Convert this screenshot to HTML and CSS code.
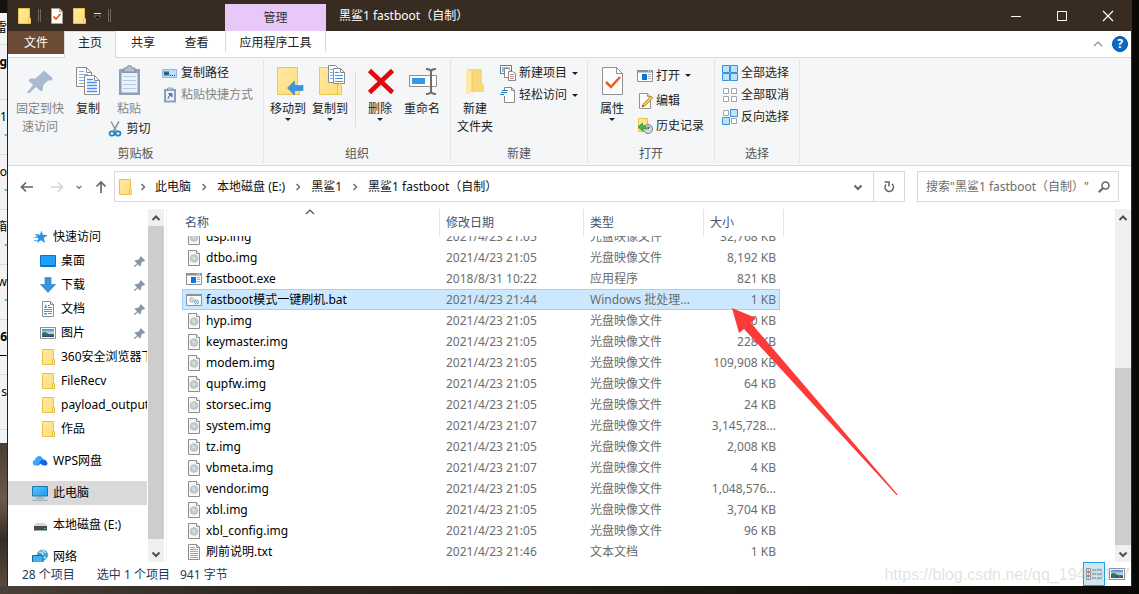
FILE: index.html
```html
<!DOCTYPE html>
<html lang="zh-CN">
<head>
<meta charset="utf-8">
<title>黑鲨1 fastboot（自制）</title>
<link rel="stylesheet" href="styles.css">
</head>
<body>
<svg class="sprite" aria-hidden="true">
  <defs>
    <linearGradient id="gFolder" x1="0" y1="0" x2="1" y2="1"><stop offset="0" stop-color="#ffe9a2"/><stop offset="1" stop-color="#ffdc7a"/></linearGradient>
    <linearGradient id="gBlue" x1="0" y1="0" x2="1" y2="1"><stop offset="0" stop-color="#5cc4fb"/><stop offset="1" stop-color="#1e9bf0"/></linearGradient>
    <linearGradient id="gSky" x1="0" y1="0" x2="0" y2="1"><stop offset="0" stop-color="#3f83d8"/><stop offset=".55" stop-color="#d6ecfa"/><stop offset=".6" stop-color="#4e8060"/><stop offset="1" stop-color="#24476b"/></linearGradient>
  </defs>
  <symbol id="folder" viewBox="0 0 16 16"><path d="M2.500.5h11v10h1v5h-12z" fill="url(#gFolder)" stroke="#e9c246"/><path d="M12.500 15v-4l1-1 1 1v4" fill="#ffe48e" stroke="#e9c246"/></symbol>
  <symbol id="checkdoc" viewBox="0 0 16 16"><path d="M2.500.5h8l3 3v12h-11z" fill="#fff" stroke="#a0a0a0"/><path d="M10.500.5v3h3" fill="none" stroke="#a0a0a0"/><path d="M4.500 8.500l2.500 2.500 4.500-5" fill="none" stroke="#f15a1c" stroke-width="1.800"/></symbol>
  <symbol id="chevR" viewBox="0 0 8 8"><path d="M2.500 1l3 3-3 3" fill="none" stroke="#6f6f6f" stroke-width="1.500"/></symbol>
  <symbol id="chevD" viewBox="0 0 12 12"><path d="M2.500 4.500l3.500 3.500 3.500-3.500" fill="none" stroke="currentColor" stroke-width="2"/></symbol>
  <symbol id="chevU" viewBox="0 0 12 12"><path d="M2.500 8l3.500-3.500 3.500 3.500" fill="none" stroke="currentColor" stroke-width="2"/></symbol>
  <symbol id="thinU" viewBox="0 0 12 12"><path d="M2 8l4-4 4 4" fill="none" stroke="currentColor" stroke-width="1.200"/></symbol>
  <symbol id="pinS" viewBox="0 0 16 16"><path d="M9.500 2.500l4.500 4.500-1 1-1.200-.2-2.300 2.300.1 2.200-1.100 1-2.500-2.500L3 14l-1-.9 3.300-3.200L2.700 7.400l1-1 2.400.1 2.200-2.200L8.500 3.300z" fill="#8a98a6"/></symbol>
  <symbol id="img" viewBox="0 0 16 16"><path d="M2.500.5h8l3 3v12h-11z" fill="#f7f7f7" stroke="#8e8e8e"/><path d="M10.500.5v3h3" fill="#fff" stroke="#8e8e8e"/><circle cx="8" cy="8.500" r="3.800" fill="#c9cccd" stroke="#b0b4b6" stroke-width=".8"/><path d="M5.800 6.300l1.500 1.500" stroke="#e8eaeb"/><circle cx="8" cy="8.500" r=".8" fill="#f4f4f4"/></symbol>
  <symbol id="exe" viewBox="0 0 16 16"><path d="M.5 2.500h15v11H.5z" fill="#fff" stroke="#8b9299"/><path d="M0 2h16v2.500H0z" fill="#8b9299"/><path d="M11 3h1m1 0h1" stroke="#fff"/><path d="M5 6h5v6H5z" fill="#0a78d7"/><path d="M11 6.500h3M11 8.500h3M11 10.500h3" stroke="#a6acb2"/></symbol>
  <symbol id="bat" viewBox="0 0 16 16"><path d="M.5 2.500h15v11H.5z" fill="#f8fafb" stroke="#8b9299"/><path d="M0 2h16v2H0z" fill="#8b9299"/><circle cx="6" cy="8" r="2.200" fill="#fff" stroke="#7c858d" stroke-dasharray="1.500 .5"/><circle cx="6" cy="8" r=".8" fill="#7c858d"/><circle cx="10.500" cy="10" r="2" fill="#dff1fb" stroke="#78a9c5"/><circle cx="10.500" cy="10" r=".6" fill="#4f8aac"/></symbol>
  <symbol id="txt" viewBox="0 0 16 16"><path d="M2.500.5h8l3 3v12h-11z" fill="#fff" stroke="#8e8e8e"/><path d="M10.500.5v3h3" fill="none" stroke="#8e8e8e"/><path d="M4 3.500h5M4 5.500h8M4 7.500h8M4 9.500h8M4 11.500h8M4 13.500h8" stroke="#a2a2a2"/></symbol>
  <symbol id="pic" viewBox="0 0 16 16"><path d="M.5 2.500h15v11H.5z" fill="#fff" stroke="#8f8f8f"/><path d="M2 4h12v8H2z" fill="url(#gSky)"/><path d="M2 8q3-2 5 0t7 1v1H2z" fill="#3d6e52"/></symbol>
  <symbol id="copyL" viewBox="0 0 32 32"><path d="M4.500 2.500h10l5 5v14h-15z" fill="#fff" stroke="#8b8b8b"/><path d="M14.500 2.500v5h5" fill="none" stroke="#8b8b8b"/><path d="M7 6.500h5M7 9.500h9M7 12.500h6M7 15.500h6M7 18.500h6" stroke="#7aaef0"/><path d="M12.500 10.500h10l5 5v14h-15z" fill="#fff" stroke="#8b8b8b"/><path d="M22.500 10.500v5h5" fill="none" stroke="#8b8b8b"/><path d="M15 14.500h6M15 17.500h10M15 20.500h10M15 23.500h10M15 26.500h10" stroke="#4d8ff0" stroke-width="1.300"/></symbol>
</svg>

<div class="desktop">
  <aside class="behind" aria-hidden="true">
    <div class="behind-page">
      <p>雷</p><p><b>g</b></p><p>.1<i>·</i></p><p>_o<i>·</i></p><p>箱<i>·</i></p><p>w<i>·</i></p><p><b>6</b>—</p><p>s</p>
    </div>
  </aside>

  <div class="window">
    <header class="titlebar">
      <div class="quick">
        <svg class="i16"><use href="#folder"/></svg>
        <span class="bar"></span>
        <svg class="i16"><use href="#checkdoc"/></svg>
        <svg class="i16"><use href="#folder"/></svg>
        <svg class="caret-s" viewBox="0 0 9 9"><path d="M1 2.500h7" stroke="#ddd"/><path d="M1 5h7L4.500 8.500z" fill="#000" stroke="#bbb" stroke-width=".5"/></svg>
        <span class="bar"></span>
      </div>
      <div class="context-head">管理</div>
      <h1>黑鲨1 fastboot（自制）</h1>
      <div class="caption">
        <button aria-label="最小化"><svg class="i12" viewBox="0 0 12 12"><path d="M1 6.500h10" stroke="#fff"/></svg></button>
        <button aria-label="最大化"><svg class="i12" viewBox="0 0 12 12"><path d="M1.500 1.500h9v9h-9z" fill="none" stroke="#fff"/></svg></button>
        <button aria-label="关闭"><svg class="i12" viewBox="0 0 12 12"><path d="M1 1l10 10M11 1L1 11" stroke="#fff" stroke-width="1.200"/></svg></button>
      </div>
    </header>

    <nav class="tabs">
      <button class="tab file">文件</button>
      <button class="tab active">主页</button>
      <button class="tab share">共享</button>
      <button class="tab view">查看</button>
      <button class="tab tools">应用程序工具</button>
      <div class="tabs-end">
        <button class="collapse" aria-label="折叠功能区"><svg class="i12"><use href="#thinU"/></svg></button>
        <button class="help" aria-label="帮助">?</button>
      </div>
    </nav>

    <section class="ribbon">
      <div class="group clip">
        <div class="tools-row">
          <button class="big off wide"><svg class="i32" viewBox="0 0 32 32"><path d="M20 5.500l9 8-2 2-3 0-5 5 0 4-2 2-5-4.500L5 28.500l-2-1 6-7.500-4.500-4.500 2-2 5 0 5.500-5z" fill="#a9bace"/></svg>固定到快<br>速访问</button>
          <button class="big copy"><svg class="i32"><use href="#copyL"/></svg>复制</button>
          <div class="paste">
            <button class="big off"><svg class="i32" viewBox="0 0 32 32"><path d="M6 4h21v26H6z" fill="#8f9fba"/><path d="M8.500 8h16v19.500h-16z" fill="#e9f1fb"/><path d="M10 11.500h13M10 15.500h13M10 19.500h13M10 23.500h13" stroke="#b9cae2"/><path d="M11 3h3a2.500 2.500 0 015 0h3v4H11z" fill="#b6c1d0" stroke="#7e8ca3"/></svg>粘贴</button>
            <button class="small"><svg class="i16" viewBox="0 0 16 16"><path d="M4 .5l5.500 10M12 .5L6.500 10" stroke="#8a949e" stroke-width="1.500"/><ellipse cx="5" cy="12.500" rx="2.500" ry="2.200" fill="none" stroke="#1683c7" stroke-width="1.700"/><ellipse cx="11" cy="12.500" rx="2.500" ry="2.200" fill="none" stroke="#1683c7" stroke-width="1.700"/></svg>剪切</button>
          </div>
          <div class="stack">
            <button class="small"><svg class="i16" viewBox="0 0 16 16"><path d="M.5 4.500h14v8H.5z" fill="#b7e2fb" stroke="#86bbdb"/><path d="M2 6.500l1 4 1-4 1 4 1-4 1 4" fill="none" stroke="#173d59" stroke-width=".9"/><path d="M8 10.500h1m1 0h1m1 0h1" stroke="#173d59"/></svg>复制路径</button>
            <button class="small off"><svg class="i16" viewBox="0 0 16 16"><path d="M2 2h12v13.500H2z" fill="#8f9fba"/><path d="M4 4h8v9.500H4z" fill="#eef3fa"/><path d="M5.500 1h5v2h-5z" fill="#cad4e2" stroke="#8f9fba"/><path d="M6 12q0-3 2.500-4M6.500 6.500H10V10z" fill="#5475a8" stroke="#5475a8"/></svg>粘贴快捷方式</button>
          </div>
        </div>
        <div class="group-name">剪贴板</div>
      </div>

      <div class="group org">
        <div class="tools-row">
          <button class="big"><svg class="i32" viewBox="0 0 32 32"><path d="M5.500 2.500h20v22h2v5h-22z" fill="url(#gFolder)" stroke="#e9c75a"/><path d="M15.500 23l7-7v4.500H31v5h-8.500V30z" fill="#3795e6" stroke="#2a7bc4" stroke-width=".6"/></svg>移动到<span class="tri"></span></button>
          <button class="big"><svg class="i32" viewBox="0 0 32 32"><path d="M5.500 2.500h18v27h-18z" fill="url(#gFolder)" stroke="#e9c75a"/><path d="M14.500.5h7l4 4v13h-11z" fill="#fff" stroke="#8b8b8b"/><path d="M16 4.500h4M16 7.500h4M16 10.500h4M16 13.500h4" stroke="#7aaef0"/><path d="M19.500 3.500h7l4 4v11h-11z" fill="#fff" stroke="#8b8b8b"/><path d="M26.500 3.500v4h4" fill="none" stroke="#8b8b8b"/><path d="M21 7.500h4M21 10.500h8M21 13.500h8M21 16.500h8" stroke="#4d8ff0"/><path d="M23.500 29.500v-9l2-2 2 2v9z" fill="#ffe48e" stroke="#e9c75a"/></svg>复制到<span class="tri"></span></button>
          <span class="rule"></span>
          <button class="big"><svg class="i32" viewBox="0 0 32 32"><path d="M5.500 5.500l23 22M28.500 5.500l-23 22" stroke="#e2050d" stroke-width="4.500"/></svg>删除<span class="tri"></span></button>
          <button class="big"><svg class="i32" viewBox="0 0 32 32"><path d="M3.500 10.500h27v11h-27z" fill="#fff" stroke="#8e8e8e"/><path d="M6 13h13v6H6z" fill="#3797e8"/><path d="M20 4q5 0 5 3 0-3 5-3M25 6v21M20 29q5 0 5-3 0 3 5 3" fill="none" stroke="#6d6d6d" stroke-width="2"/></svg>重命名</button>
        </div>
        <div class="group-name">组织</div>
      </div>

      <div class="group new">
        <div class="tools-row">
          <button class="big"><svg class="i32" viewBox="0 0 32 32"><path d="M8 4h15v14l2 2v7H8z" fill="#f9d879"/><path d="M7 4l6 3v19l-5 4-1-3z" fill="#ffe9a8"/><path d="M13 7v20" stroke="#edc85c"/></svg>新建<br>文件夹</button>
          <div class="stack">
            <button class="small"><svg class="i16" viewBox="0 0 16 16"><path d="M.5.5h11v8H.5z" fill="#fff" stroke="#557f93"/><path d="M2 2h8v5H2z" fill="#80c8e6"/><path d="M4.500 3.500h4l2 2v7h-6z" fill="#fff" stroke="#888"/><path d="M8.500 6.500h4l3 2v7h-7z" fill="#fff" stroke="#888"/><path d="M10 9.500h4M10 11.500h4M10 13.500h4" stroke="#c08b86"/></svg>新建项目<span class="tri"></span></button>
            <button class="small"><svg class="i16" viewBox="0 0 16 16"><path d="M4.500 3V.5h7l3 3v12h-10V9" fill="#fff" stroke="#888"/><path d="M11.500.5v3h3" fill="none" stroke="#888"/><path d="M2 3.500h6M1 5.500h6M0 7.500h4" stroke="#1780c8"/></svg>轻松访问<span class="tri"></span></button>
          </div>
        </div>
        <div class="group-name">新建</div>
      </div>

      <div class="group open">
        <div class="tools-row">
          <button class="big"><svg class="i32" viewBox="0 0 32 32"><path d="M6.500 2.500h14l6 6v21h-20z" fill="#fcfcfc" stroke="#929292"/><path d="M20.500 2.500v6h6" fill="none" stroke="#929292"/><path d="M10 17l5 5 9-10" fill="none" stroke="#f15a1c" stroke-width="2.500"/></svg>属性<span class="tri"></span></button>
          <div class="stack roomy">
            <button class="small"><svg class="i16"><use href="#exe"/></svg>打开<span class="tri"></span></button>
            <button class="small"><svg class="i16" viewBox="0 0 16 16"><path d="M2.500.5h8l3 3v12h-11z" fill="#fff" stroke="#929292"/><path d="M10.500.5v3h3" fill="none" stroke="#929292"/><path d="M5 14l1-3 8-8 2 2-8 8z" fill="#f4c34e" stroke="#a87b35" stroke-width=".7"/><path d="M5 14l1-2 1 1z" fill="#333"/></svg>编辑</button>
            <button class="small"><svg class="i16" viewBox="0 0 16 16"><path d="M1.500.5h9v13h-9z" fill="url(#gFolder)" stroke="#e9c246"/><circle cx="11" cy="11" r="4.500" fill="#d8dbdd" stroke="#787d80"/><path d="M11 8v3l2-2" fill="none" stroke="#555"/><path d="M1 9l4.500-4v2.300q4 .2 4.300 4.200-2-1.500-4.300-1v2.500z" fill="#46b749" stroke="#27852a" stroke-width=".6"/></svg>历史记录</button>
          </div>
        </div>
        <div class="group-name">打开</div>
      </div>

      <div class="group select">
        <div class="tools-row">
          <div class="stack">
            <button class="small"><svg class="i16" viewBox="0 0 16 16"><path d="M.5.5h7v7h-7zM8.500.5h7v7h-7zM.5 8.500h7v7h-7zM8.500 8.500h7v7h-7z" fill="#b8e3fb" stroke="#3a92dc"/></svg>全部选择</button>
            <button class="small"><svg class="i16" viewBox="0 0 16 16"><path d="M1.500 1.500h5v5h-5zM9.500 1.500h5v5h-5zM1.500 9.500h5v5h-5zM9.500 9.500h5v5h-5z" fill="#fff" stroke="#a5a5a5"/></svg>全部取消</button>
            <button class="small"><svg class="i16" viewBox="0 0 16 16"><path d="M1.500 1.500h5v5h-5zM9.500 9.500h5v5h-5z" fill="#fff" stroke="#a5a5a5"/><path d="M8.500.5h7v7h-7zM.5 8.500h7v7h-7z" fill="#b8e3fb" stroke="#3a92dc"/></svg>反向选择</button>
          </div>
        </div>
        <div class="group-name">选择</div>
      </div>
    </section>

    <div class="locbar">
      <div class="arrows">
        <button aria-label="后退"><svg class="i16" viewBox="0 0 16 16"><path d="M14 8H3M7 3.500L2.500 8 7 12.500" fill="none" stroke="#666" stroke-width="1.700"/></svg></button>
        <button aria-label="前进"><svg class="i16" viewBox="0 0 16 16"><path d="M2 8h11M9 3.500l4.500 4.500L9 12.500" fill="none" stroke="#d5d5d5" stroke-width="1.700"/></svg></button>
        <button class="recent" aria-label="最近"><svg class="i8" viewBox="0 0 12 12"><use href="#chevD"/></svg></button>
        <button aria-label="上移"><svg class="i16" viewBox="0 0 16 16"><path d="M8 14V3M3.500 7.500L8 3l4.500 4.500" fill="none" stroke="#666" stroke-width="1.700"/></svg></button>
      </div>
      <div class="address">
        <svg class="i16"><use href="#folder"/></svg>
        <svg class="i8"><use href="#chevR"/></svg><a href="#">此电脑</a>
        <svg class="i8"><use href="#chevR"/></svg><a href="#">本地磁盘 (E:)</a>
        <svg class="i8"><use href="#chevR"/></svg><a href="#">黑鲨1</a>
        <svg class="i8"><use href="#chevR"/></svg><a href="#">黑鲨1 fastboot（自制）</a>
        <button class="drop" aria-label="以前的位置"><svg class="i12"><use href="#chevD"/></svg></button>
        <button class="refresh" aria-label="刷新"><svg class="i12" viewBox="0 0 12 12"><path d="M3 3.500A4.200 4.200 0 109 3" fill="none" stroke="#666" stroke-width="1.600"/><path d="M1.500 1h4.500v4.500" fill="none" stroke="#666" stroke-width="1.600"/></svg></button>
      </div>
      <label class="search">
        <input type="text" aria-label="搜索" placeholder="搜索&quot;黑鲨1 fastboot（自制）&quot;">
        <svg class="i12" viewBox="0 0 12 12"><circle cx="7.500" cy="4.500" r="3.500" fill="none" stroke="#666" stroke-width="1.600"/><path d="M5 7L.8 11.200" stroke="#666" stroke-width="2"/></svg>
      </label>
    </div>

    <main class="body">
      <div class="navpane">
        <ul class="tree">
          <li><svg class="i16" viewBox="0 0 16 16"><path d="M9.500 1.500l1.300 4.300 4.700.2-3.700 3 1.200 5-4-2.700-4 2.700 1.300-4.600L3.500 6.500l4.500-.7z" fill="#2b93df"/><path d="M3 5.500h4M1.500 8.500h4M2 11.500h4" stroke="#5cb8f0"/></svg><span>快速访问</span></li>
          <li class="sub"><svg class="i16" viewBox="0 0 16 16"><path d="M.5 2.500h15v11H.5z" fill="#1ea0f7" stroke="#0b74c4"/><path d="M1 12.500h14" stroke="#0b74c4"/></svg><span>桌面</span><svg class="pin"><use href="#pinS"/></svg></li>
          <li class="sub"><svg class="i16" viewBox="0 0 16 16"><path d="M5 .5h6v7h4.500L8 15.500.5 7.500H5z" fill="#3a93e2" stroke="#2a78c0" stroke-width=".6"/></svg><span>下载</span><svg class="pin"><use href="#pinS"/></svg></li>
          <li class="sub"><svg class="i16" viewBox="0 0 16 16"><path d="M2.500.5h8l3 3v12h-11z" fill="#fff" stroke="#8e8e8e"/><path d="M10.500.5v3h3" fill="none" stroke="#8e8e8e"/><path d="M8 4.500h2M8 6.500h4M4 8.500h8M4 10.500h8M8 12.500h4" stroke="#3b9adb"/><path d="M4 7l2-4 1 4M4 12h3v1.500H4z" fill="#3b9adb"/></svg><span>文档</span><svg class="pin"><use href="#pinS"/></svg></li>
          <li class="sub"><svg class="i16"><use href="#pic"/></svg><span>图片</span><svg class="pin"><use href="#pinS"/></svg></li>
          <li class="sub"><svg class="i16"><use href="#folder"/></svg><span>360安全浏览器下载</span></li>
          <li class="sub"><svg class="i16"><use href="#folder"/></svg><span>FileRecv</span></li>
          <li class="sub"><svg class="i16"><use href="#folder"/></svg><span>payload_output</span></li>
          <li class="sub"><svg class="i16"><use href="#folder"/></svg><span>作品</span></li>
          <li class="root"><svg class="i16" viewBox="0 0 16 16"><path d="M2.500 12.500a2.800 2.800 0 01.5-5.400A4 4 0 0110 4.500q1 .7 1.300 1.700L6 12.500z" fill="#3aa4ff"/><path d="M5 12.500q2.500-1 3-4a3.800 3.800 0 017 .5 2.200 2.200 0 01-1 3.500h-2.500q-2-.3-3-2-1 1.800-3.500 2z" fill="#1264e8"/></svg><span>WPS网盘</span></li>
          <li class="root current"><svg class="i16" viewBox="0 0 16 16"><path d="M.5 1.500h15v9.500H.5z" fill="url(#gBlue)" stroke="#1b76b8"/><path d="M4 13h8" stroke="#7794a8"/><path d="M0 15.300h16" stroke="#94aabd"/></svg><span>此电脑</span></li>
          <li class="root"><svg class="i16" viewBox="0 0 16 16"><path d="M4 6h9l2 3H2z" fill="#d7d7d7"/><path d="M2 9h13v4.500H2z" fill="#4b4b4b"/><path d="M12 11.500h1.500" stroke="#3fe060"/></svg><span>本地磁盘 (E:)</span></li>
          <li class="root"><svg class="i16" viewBox="0 0 16 16"><circle cx="10.500" cy="6" r="5.500" fill="#4a9fcc"/><path d="M7 3q4 0 4 3t3 3M10 1l4 3" stroke="#c5e6f4" stroke-width="1.500" fill="none"/><path d="M.5 6.500h10.500v7H.5z" fill="#42b1f3" stroke="#17659d"/></svg><span>网络</span></li>
        </ul>
        <div class="scroll"><svg class="i12"><use href="#chevU"/></svg><span class="thumb"></span><svg class="i12"><use href="#chevD"/></svg></div>
      </div>

      <div class="content">
        <table class="files">
          <thead><tr><th>名称<svg class="i12 sort"><use href="#thinU"/></svg></th><th>修改日期</th><th>类型</th><th>大小</th></tr></thead>
          <tbody>
            <tr><td><svg class="i16"><use href="#img"/></svg>dsp.img</td><td>2021/4/23 21:05</td><td>光盘映像文件</td><td>32,768 KB</td></tr>
            <tr><td><svg class="i16"><use href="#img"/></svg>dtbo.img</td><td>2021/4/23 21:05</td><td>光盘映像文件</td><td>8,192 KB</td></tr>
            <tr><td><svg class="i16"><use href="#exe"/></svg>fastboot.exe</td><td>2018/8/31 10:22</td><td>应用程序</td><td>821 KB</td></tr>
            <tr class="picked"><td><svg class="i16"><use href="#bat"/></svg>fastboot模式一键刷机.bat</td><td>2021/4/23 21:44</td><td>Windows 批处理...</td><td>1 KB</td></tr>
            <tr><td><svg class="i16"><use href="#img"/></svg>hyp.img</td><td>2021/4/23 21:05</td><td>光盘映像文件</td><td>0 KB</td></tr>
            <tr><td><svg class="i16"><use href="#img"/></svg>keymaster.img</td><td>2021/4/23 21:05</td><td>光盘映像文件</td><td>228 KB</td></tr>
            <tr><td><svg class="i16"><use href="#img"/></svg>modem.img</td><td>2021/4/23 21:05</td><td>光盘映像文件</td><td>109,908 KB</td></tr>
            <tr><td><svg class="i16"><use href="#img"/></svg>qupfw.img</td><td>2021/4/23 21:05</td><td>光盘映像文件</td><td>64 KB</td></tr>
            <tr><td><svg class="i16"><use href="#img"/></svg>storsec.img</td><td>2021/4/23 21:05</td><td>光盘映像文件</td><td>24 KB</td></tr>
            <tr><td><svg class="i16"><use href="#img"/></svg>system.img</td><td>2021/4/23 21:07</td><td>光盘映像文件</td><td>3,145,728...</td></tr>
            <tr><td><svg class="i16"><use href="#img"/></svg>tz.img</td><td>2021/4/23 21:05</td><td>光盘映像文件</td><td>2,008 KB</td></tr>
            <tr><td><svg class="i16"><use href="#img"/></svg>vbmeta.img</td><td>2021/4/23 21:07</td><td>光盘映像文件</td><td>4 KB</td></tr>
            <tr><td><svg class="i16"><use href="#img"/></svg>vendor.img</td><td>2021/4/23 21:05</td><td>光盘映像文件</td><td>1,048,576...</td></tr>
            <tr><td><svg class="i16"><use href="#img"/></svg>xbl.img</td><td>2021/4/23 21:05</td><td>光盘映像文件</td><td>3,704 KB</td></tr>
            <tr><td><svg class="i16"><use href="#img"/></svg>xbl_config.img</td><td>2021/4/23 21:05</td><td>光盘映像文件</td><td>96 KB</td></tr>
            <tr><td><svg class="i16"><use href="#txt"/></svg>刷前说明.txt</td><td>2021/4/23 21:46</td><td>文本文档</td><td>1 KB</td></tr>
          </tbody>
        </table>
        <svg class="pointer" viewBox="0 0 166 188" aria-hidden="true"><path d="M0 0L24 10 19 15 166 187 164.500 187 12 21 7 25z" fill="#fc3a38"/></svg>
        <div class="scroll low"><svg class="i12"><use href="#chevU"/></svg><span class="thumb"></span><svg class="i12"><use href="#chevD"/></svg></div>
      </div>
    </main>

    <footer class="status">
      <span>28 个项目</span><span class="sel">选中 1 个项目</span><span class="bytes">941 字节</span>
      <div class="views">
        <button class="on" aria-label="详细信息"><svg class="i16" viewBox="0 0 16 16"><path d="M.5 2.500h4v3h-4zM.5 6.500h4v3h-4zM.5 10.500h4v3h-4z" fill="#fff" stroke="#8c8c8c"/><path d="M2 4h1M2 8h1M2 12h1" stroke="#b4463c"/><path d="M6 4h4m1 0h5M6 8h4m1 0h5M6 12h4m1 0h5" stroke="#777"/></svg></button>
        <button aria-label="大缩略图"><svg class="i16"><use href="#pic"/></svg></button>
      </div>
      <div class="watermark">https://blog.csdn.net/qq_19489137</div>
    </footer>
  </div>
</div>
</body>
</html>
```

FILE: styles.css
```css
* { box-sizing: border-box; }
body {
  margin: 0;
  font: 12px/18px "Noto Sans", "Noto Sans CJK SC", sans-serif;
  color: #000;
}
button {
  margin: 0; padding: 0; border: 0;
  background: none; color: inherit; font: inherit;
  display: flex; align-items: center; justify-content: center;
}
a { color: inherit; text-decoration: none; }
svg { flex: none; display: block; }
.sprite { position: absolute; width: 0; height: 0; }
.i8 { width: 8px; height: 8px; }
.i12 { width: 12px; height: 12px; }
.i16 { width: 16px; height: 16px; }
.i32 { width: 32px; height: 32px; }

.desktop {
  height: 100vh;
  display: grid;
  grid-template-columns: 8px 1fr 7px;
  padding-bottom: 8px;
  background: linear-gradient(90deg, #4a4037, #2f2a23 20%, #1c1812 60%, #0b0906);
}
.behind {
  overflow: hidden;
  padding-top: 13px;
  background: linear-gradient(#15110e, #15110e 13px, #4a3e33 443px, #6b5a4a 500px, #352c25 540px, #5a4b3e);
  border-right: 1px solid #2a2019;
}
.behind-page { background: #f2f2f2; height: 430px; overflow: hidden; }
.behind-page p {
  margin: 0; height: 55px; padding-top: 8px;
  border-bottom: 1px solid #d8d8d8;
  display: flex; flex-direction: column; align-items: flex-end;
}
.behind-page p:first-child { height: 32px; padding-top: 6px; }
.behind-page i { color: #28b4f0; font-weight: bold; font-style: normal; }

.window { display: flex; flex-direction: column; min-width: 0; min-height: 0; background: #fff; border-right: 1px solid #382b21; }

.titlebar { display: flex; height: 31px; flex: none; background: #382b21; color: #fff; margin-right: -1px; }
.quick { width: 217px; display: flex; align-items: center; gap: 6px; padding-left: 8px; }
.quick .bar { width: 3px; height: 13px; margin-right: 2px; border: solid #6f675f; border-width: 0 1px; }
.caret-s { width: 9px; height: 9px; }
.context-head { width: 101px; margin-top: 4px; background: #e8c8f8; color: #333; text-align: center; line-height: 27px; }
h1 { margin: 0 0 0 13px; font: inherit; line-height: 31px; flex: 1; }
.caption { display: flex; padding-right: 1px; }
.caption button { width: 46px; }

.tabs { display: flex; height: 27px; flex: none; border-bottom: 1px solid #dadbdc; color: #222; }
.tab { line-height: 24px; align-items: flex-start; }
.file { width: 56px; height: 23px; background: #6b4b35; color: #fff; }
.active { width: 52px; height: 27px; background: #f5f6f7; border: solid #dadbdc; border-width: 1px 1px 0; line-height: 22px; }
.share { width: 54px; }
.view { width: 55px; padding-right: 2px; }
.tools { width: 101px; height: 21px; border: solid #dadbdc; border-width: 0 1px; }
.tabs-end { margin-left: auto; display: flex; align-items: center; gap: 8px; padding-right: 3px; color: #888; }
.help { width: 16px; height: 16px; border-radius: 50%; background: #0b6ac6; border: 1px solid #084f9b; color: #fff; font-weight: bold; line-height: 14px; }

.ribbon { display: flex; flex: none; height: 108px; padding: 2px 0 3px; background: #f5f6f7; border-bottom: 1px solid #dadbdc; color: #222; }
.group { display: flex; flex-direction: column; justify-content: space-between; border-right: 1px solid #e2e3e4; }
.group-name { text-align: center; color: #555; line-height: 16px; }
.tools-row { display: flex; align-items: flex-start; padding-top: 5px; }
.clip { width: 256px; }
.org { width: 187px; }
.new { width: 137px; }
.open { width: 127px; }
.select { width: 85px; }
.big { flex-direction: column; width: 42px; text-align: center; white-space: nowrap; }
.big .i32 { margin-bottom: 3px; }
.big.wide { width: 64px; }
.big.copy { width: 32px; }
.off { color: #838383; }
.paste { display: flex; flex-direction: column; align-items: center; width: 50px; }
.small { height: 22px; gap: 3px; justify-content: flex-start; white-space: nowrap; }
.stack { display: flex; flex-direction: column; margin-top: -3px; padding-left: 3px; }
.clip .stack { padding-left: 8px; }
.roomy { margin-top: -2px; padding-left: 4px; }
.roomy .small { height: 25px; }
.tri { border: 3px solid transparent; border-top-color: #222; border-bottom: 0; }
.small .tri { margin-left: 2px; }
.org .tools-row { padding-left: 3px; }
.org .rule { width: 1px; height: 55px; margin: 7px 3px 0 4px; background: #dcdddf; }
.new .tools-row { padding-left: 3px; }
.new .stack { padding-left: 4px; }
.open .tools-row { padding-left: 3px; }
.select .stack { padding-left: 7px; }

.locbar { display: flex; flex: none; height: 43px; padding: 5px 12px 7px 11px; color: #111; }
.arrows { display: flex; align-items: center; width: 95px; gap: 14px; color: #777; }
.arrows .recent { margin: 0 -4px; }
.address { flex: 1; display: flex; align-items: center; border: 1px solid #d9d9d9; padding-left: 2px; min-width: 0; }
.address > .i8 { margin: 0 8px 0 6px; }
.address a + .i8 { margin: 0 9px; }
.address .drop { margin-left: auto; width: 30px; color: #666; }
.refresh { width: 31px; align-self: stretch; border-left: 1px solid #d9d9d9; }
.search { display: flex; align-items: center; width: 202px; margin-left: 12px; padding: 0 8px; border: 1px solid #d9d9d9; }
.search input { flex: 1; min-width: 0; padding: 0; border: 0; outline: 0; font: inherit; background: none; }
.search input::placeholder { color: #6d6d6d; opacity: 1; }

.body { flex: 1; display: flex; min-height: 0; }
.navpane { width: 156px; flex: none; display: flex; }
.tree { flex: 1; min-width: 0; margin: 0 1px 0 0; padding: 16px 0 0; list-style: none; overflow: hidden; }
.tree li { display: flex; align-items: center; gap: 5px; height: 24px; padding-left: 24px; white-space: nowrap; overflow: hidden; }
.tree .sub { padding-left: 32px; }
.tree .root { margin-top: 8px; }
.tree .current { background: #d9d9d9; }
.tree .pin { width: 15px; height: 15px; margin-left: auto; }
.scroll { width: 16px; flex: none; display: flex; flex-direction: column; align-items: center; background: #f0f0f0; color: #505050; }
.scroll > svg { margin: 3px 0 2px; }
.thumb { flex: 1; width: 100%; background: #cdcdcd; }
.navpane .thumb { margin-bottom: 6px; }
.low .thumb { margin-top: 142px; }

.content { position: relative; flex: 1; display: flex; min-width: 0; margin-left: 2px; border-left: 1px solid #f2f2f2; }
.files { flex: 1; display: flex; flex-direction: column; min-width: 0; padding-left: 15px; }
.files tr { display: grid; grid-template-columns: 257px 144px 120px 80px; }
.files thead { display: block; flex: none; height: 27px; padding-left: 1px; color: #44546f; }
.files th { position: relative; height: 27px; padding: 5px 0 0 6px; text-align: left; font-weight: normal; border-right: 1px solid #e5e5e5; }
.files th:first-child { padding-left: 2px; }
.sort { position: absolute; top: -3px; left: 50%; margin-left: -7px; }
.files tbody { flex: 1; min-height: 0; overflow: hidden; display: flex; flex-direction: column; justify-content: flex-end; }
.files tbody tr { height: 21px; flex: none; width: 598px; }
.files td { padding: 0 7px; line-height: 21px; color: #6d6d6d; white-space: nowrap; }
.files td:first-child { display: flex; align-items: center; gap: 4px; padding-left: 4px; color: #000; }
.files td:last-child { padding-right: 4px; text-align: right; }
.picked { background: #cce8ff; outline: 1px solid #99d1ff; outline-offset: -1px; }
.files tbody tr { grid-template-columns: 257px 144px 120px 77px; }
.pointer { position: absolute; left: 565px; top: 99px; width: 166px; height: 188px; }

.status { position: relative; flex: none; display: flex; align-items: center; height: 24px; padding: 1px 0 0 14px; color: #1e395b; }
.status .sel { margin-left: 22px; }
.status .bytes { margin-left: 10px; }
.views { margin-left: auto; display: flex; align-self: stretch; margin-top: -1px; padding-right: 2px; }
.views button { width: 24px; }
.views .on { width: 22px; background: #cce8f6; border: 1px solid #26a0da; }
.watermark { position: absolute; right: 1px; bottom: 0; font: 16px/22px "Liberation Sans", Arial, sans-serif; color: rgba(170, 170, 170, .35); pointer-events: none; }
```
